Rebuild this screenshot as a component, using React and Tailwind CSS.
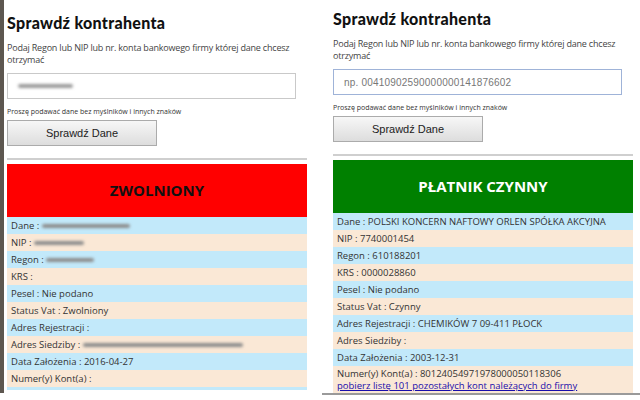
import React from "react";

const ui = { fontFamily: '"Open Sans", "Noto Sans", sans-serif' };
const btnFont = { fontFamily: '"Liberation Sans", Arial, sans-serif' };
const titleFont = { fontFamily: 'Lato, "Open Sans", sans-serif' };

// blurred placeholder for hidden company data
const Smudge = ({ w }) => (
  <span className={`inline-block align-middle h-[4px] ${w} rounded-full bg-[#8c8c8c] blur-[1.5px]`} />
);

const Row = ({ i, label, value, smudge, children }) => (
  <div
    className={`px-[4px] text-[9.5px] leading-[17px] text-[#333] whitespace-nowrap ${
      i % 2 === 0 ? "bg-[#c2e9fa]" : "bg-[#fae8d6]"
    }`}
  >
    {label} : {value}
    {smudge && <Smudge w={smudge} />}
    {children}
  </div>
);

const SearchForm = ({ placeholder, focused, blurred }) => (
  <>
    <h1 className="text-[16px] leading-[24px] font-black text-[#111] tracking-[0.3px]" style={titleFont}>
      Sprawdź kontrahenta
    </h1>
    <p className="mt-[7px] text-[9px] leading-[12px] text-[#444] tracking-[-0.2px]">
      Podaj Regon lub NIP lub nr. konta bankowego firmy której dane chcesz otrzymać
    </p>
    <div
      className={`mt-[7px] w-[289px] h-[26px] flex items-center px-[10px] bg-white border ${
        focused ? "border-[#9fb3d8]" : "border-[#c9c9c9]"
      }`}
    >
      {blurred ? (
        <span className="inline-block h-[4px] w-[55px] rounded-full bg-[#9a9a9a] blur-[1.5px]" />
      ) : (
        <span className="text-[10px] text-[#777] tracking-[0.2px]" style={btnFont}>
          {placeholder}
        </span>
      )}
    </div>
    <p className="mt-[8px] text-[7px] leading-[9px] text-[#333]">
      Proszę podawać dane bez myślników i innych znaków
    </p>
    <button
      className="mt-[4px] w-[150px] h-[26px] border border-[#ababab] bg-gradient-to-b from-[#f7f7f7] to-[#dddddd] text-[11px] text-[#222]"
      style={btnFont}
    >
      Sprawdź Dane
    </button>
    <div className="mt-[12px] h-[2px] bg-[#cfcfcf]" />
  </>
);

export default function App() {
  return (
    <div className="w-[640px] h-[400px] bg-white flex overflow-hidden" style={ui}>
      {/* left capture */}
      <div className="w-[312px] h-[393px] border-l-[4px] border-[#5d5750] pl-[3px] pt-[11px] flex flex-col overflow-hidden">
        <div className="w-[300px]">
          <SearchForm blurred />
        </div>
        <div className="w-[300px] mt-[4px]">
          <div className="h-[53px] bg-[#ff0000] flex items-center justify-center text-[15px] font-bold text-[#111]">
            ZWOLNIONY
          </div>
          <Row i={0} label="Dane" smudge="w-[88px]" />
          <Row i={1} label="NIP" smudge="w-[50px]" />
          <Row i={2} label="Regon" smudge="w-[48px]" />
          <Row i={3} label="KRS" />
          <Row i={4} label="Pesel" value="Nie podano" />
          <Row i={5} label="Status Vat" value="Zwolniony" />
          <Row i={6} label="Adres Rejestracji" />
          <Row i={7} label="Adres Siedziby" smudge="w-[160px]" />
          <Row i={8} label="Data Założenia" value="2016-04-27" />
          <Row i={9} label="Numer(y) Kont(a)" />
          <div className="h-[3px] bg-[#c2e9fa]" />
        </div>
      </div>

      {/* right capture */}
      <div className="ml-[10px] flex-1 h-[395px] border-b-[2px] border-[#9a9a9a] pl-[11px] pt-[7px] flex flex-col overflow-hidden">
        <div className="w-[300px]">
          <SearchForm placeholder="np. 00410902590000000141876602" focused />
        </div>
        <div className="w-[300px] mt-[4px]">
          <div className="h-[53px] bg-[#008000] flex items-center justify-center text-[15px] font-bold text-white">
            PŁATNIK CZYNNY
          </div>
          <Row i={0} label="Dane" value="POLSKI KONCERN NAFTOWY ORLEN SPÓŁKA AKCYJNA" />
          <Row i={1} label="NIP" value="7740001454" />
          <Row i={2} label="Regon" value="610188201" />
          <Row i={3} label="KRS" value="0000028860" />
          <Row i={4} label="Pesel" value="Nie podano" />
          <Row i={5} label="Status Vat" value="Czynny" />
          <Row i={6} label="Adres Rejestracji" value="CHEMIKÓW 7 09-411 PŁOCK" />
          <Row i={7} label="Adres Siedziby" />
          <Row i={8} label="Data Założenia" value="2003-12-31" />
          <div className="px-[4px] pt-[2px] pb-[2px] bg-[#fae8d6] text-[9.5px] leading-[12px] text-[#333] whitespace-nowrap">
            <div>Numer(y) Kont(a) : 80124054971978000050118306</div>
            <a className="block text-[#1a0dab] underline">pobierz listę 101 pozostałych kont należących do firmy</a>
          </div>
        </div>
      </div>
    </div>
  );
}
